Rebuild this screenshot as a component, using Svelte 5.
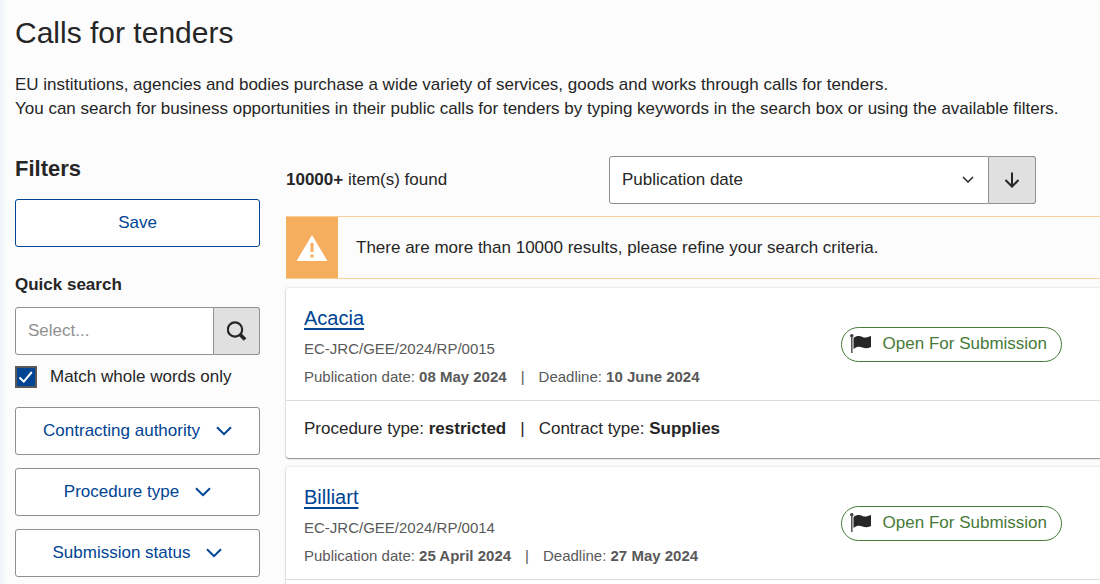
<script>
	let keyword = $state('');
	let wholeWords = $state(true);
	let sortBy = $state('publication');
	let descending = $state(true);

	const filters = ['Contracting authority', 'Procedure type', 'Submission status'];

	const tenders = [
		{
			title: 'Acacia',
			reference: 'EC-JRC/GEE/2024/RP/0015',
			published: '08 May 2024',
			deadline: '10 June 2024',
			procedure: 'restricted',
			contract: 'Supplies',
			status: 'Open For Submission'
		},
		{
			title: 'Billiart',
			reference: 'EC-JRC/GEE/2024/RP/0014',
			published: '25 April 2024',
			deadline: '27 May 2024',
			procedure: '',
			contract: '',
			status: 'Open For Submission'
		}
	];
</script>

<main>
	<h1>Calls for tenders</h1>
	<p class="intro">
		EU institutions, agencies and bodies purchase a wide variety of services, goods and works through calls for tenders.<br />
		You can search for business opportunities in their public calls for tenders by typing keywords in the search box or using the available filters.
	</p>

	<div class="columns">
		<aside>
			<h2>Filters</h2>
			<button class="save" type="button">Save</button>

			<label class="heading" for="keyword">Quick search</label>
			<div class="search">
				<input id="keyword" type="text" placeholder="Select..." bind:value={keyword} />
				<button type="button" aria-label="Search">
					<svg width="20" height="20" viewBox="0 0 20 20">
						<circle cx="8" cy="8.5" r="7.2" fill="none" stroke="#262626" stroke-width="2.2" />
						<path d="M12.5 13 L18.1 18.6" stroke="#262626" stroke-width="3.6" />
					</svg>
				</button>
			</div>

			<label class="check">
				<input type="checkbox" bind:checked={wholeWords} />
				<svg width="22" height="22" viewBox="0 0 22 22">
					<path d="M4.5 11.5 L8.8 15.6 L16.8 6" fill="none" stroke="#fff" stroke-width="2" />
				</svg>
				<span>Match whole words only</span>
			</label>

			<div class="filters">
				{#each filters as filter}
					<button type="button">
						{filter}
						<svg width="16" height="10" viewBox="0 0 16 10">
							<path d="M1 1.2 L8 8.2 L15 1.2" fill="none" stroke="#004494" stroke-width="2" />
						</svg>
					</button>
				{/each}
			</div>
		</aside>

		<section>
			<div class="toolbar">
				<p><strong>10000+</strong> item(s) found</p>
				<div class="sort">
					<select aria-label="Sort by" bind:value={sortBy}>
						<option value="publication">Publication date</option>
						<option value="deadline">Deadline</option>
					</select>
					<svg class="caret" width="12" height="8" viewBox="0 0 12 8">
						<path d="M1 1 L6 6 L11 1" fill="none" stroke="#262626" stroke-width="1.5" />
					</svg>
					<button type="button" aria-label="Sort direction" onclick={() => (descending = !descending)}>
						<svg class:up={!descending} width="16" height="16" viewBox="0 0 16 16">
							<path d="M8 0.5 V14.5 M1.5 8 L8 14.5 L14.5 8" fill="none" stroke="#262626" stroke-width="2" />
						</svg>
					</button>
				</div>
			</div>

			<div class="alert" role="alert">
				<div class="icon">
					<svg width="32" height="26" viewBox="0 0 32 26">
						<path d="M16 0 L31.5 26 H0.5 Z" fill="#fff" />
						<path d="M14.5 8 H17.5 V17 H14.5 Z M14.5 19.5 H17.5 V22.5 H14.5 Z" fill="#f5ae5d" />
					</svg>
				</div>
				<p>There are more than 10000 results, please refine your search criteria.</p>
			</div>

			{#each tenders as tender}
				<article>
					<header>
						<div class="summary">
							<h3><a href="#{tender.title}">{tender.title}</a></h3>
							<p>{tender.reference}</p>
							<p>
								Publication date: <strong>{tender.published}</strong><span class="bar">|</span>Deadline: <strong>{tender.deadline}</strong>
							</p>
						</div>
						<span class="status">
							<svg width="22" height="20" viewBox="0 0 22 20">
								<circle cx="1.8" cy="1.8" r="1.8" fill="#404040" />
								<path d="M1.8 2 V19" stroke="#505050" stroke-width="1.5" />
								<path d="M3.5 4 C7 1.2 10 1.8 12.5 3 C15 4.2 18 3.2 21 2 V13 C18 14.4 15.5 14.8 12.5 13.6 C9.5 12.4 7 12.4 3.5 15 Z" fill="#262626" />
							</svg>
							{tender.status}
						</span>
					</header>
					<footer>
						{#if tender.procedure}
							Procedure type: <strong>{tender.procedure}</strong><span class="bar">|</span>Contract type: <strong>{tender.contract}</strong>
						{/if}
					</footer>
				</article>
			{/each}
		</section>
	</div>
</main>

<style>
	:global(body) {
		margin: 0;
		background: #fcfcfc;
		overflow: hidden;
	}

	main {
		padding: 16px 0 0 15px;
		min-height: 100vh;
		box-sizing: border-box;
		font-family: "Liberation Sans", Arial, sans-serif;
		font-size: 17px;
		line-height: 24px;
		color: #262626;
		background: linear-gradient(to right, #f0f3f8, #fcfcfc 8px);
	}

	h1, h2, h3, p {
		margin: 0;
		font-weight: normal;
	}

	button, input, select {
		box-sizing: border-box;
		font: inherit;
		color: inherit;
		margin: 0;
	}

	button {
		cursor: pointer;
	}

	h1 {
		font-size: 30px;
		line-height: 34px;
	}

	.intro {
		margin-top: 23px;
		white-space: nowrap;
	}

	.columns {
		display: grid;
		grid-template-columns: 245px 1fr;
		column-gap: 26px;
		margin-top: 35px;
	}

	aside h2 {
		font-size: 22px;
		font-weight: bold;
		line-height: 26px;
	}

	.save {
		width: 100%;
		height: 48px;
		margin-top: 17px;
		background: #fff;
		border: 1px solid #004494;
		border-radius: 3px;
		color: #004494;
	}

	.heading {
		display: block;
		margin: 26px 0 10px;
		font-weight: bold;
	}

	.search {
		display: flex;
		height: 48px;
	}

	.search input {
		flex: 1;
		min-width: 0;
		padding: 0 12px;
		border: 1px solid #909090;
		border-radius: 3px 0 0 3px;
		background: #fff;
	}

	.search input::placeholder {
		color: #909090;
		opacity: 1;
	}

	.search button, .sort button {
		display: flex;
		align-items: center;
		justify-content: center;
		width: 46px;
		padding: 0;
		border: 1px solid #909090;
		border-left: 0;
		border-radius: 0 3px 3px 0;
		background: #e0e0e0;
	}

	.check {
		position: relative;
		display: flex;
		align-items: center;
		gap: 13px;
		margin-top: 10px;
	}

	.check input {
		appearance: none;
		width: 22px;
		height: 22px;
		border: 2px solid #595959;
		background: #fff;
	}

	.check input:checked {
		background: #004494;
	}

	.check svg {
		position: absolute;
		left: 0;
		pointer-events: none;
	}

	.check input:not(:checked) + svg {
		display: none;
	}

	.filters {
		display: flex;
		flex-direction: column;
		gap: 13px;
		margin-top: 18px;
	}

	.filters button {
		display: flex;
		align-items: center;
		justify-content: center;
		gap: 16px;
		height: 48px;
		border: 1px solid #909090;
		border-radius: 3px;
		background: #fff;
		color: #004494;
	}

	section {
		min-width: 0;
	}

	.toolbar {
		display: flex;
		align-items: center;
		justify-content: space-between;
		padding-right: 64px;
	}

	.sort {
		position: relative;
		display: flex;
		width: 427px;
		height: 48px;
	}

	.sort select {
		flex: 1;
		appearance: none;
		padding: 0 12px;
		border: 1px solid #909090;
		border-radius: 3px 0 0 3px;
		background: #fff;
	}

	.sort .caret {
		position: absolute;
		right: 62px;
		top: 20px;
		pointer-events: none;
	}

	.sort button {
		width: 47px;
	}

	.up {
		transform: rotate(180deg);
	}

	.alert {
		display: flex;
		align-items: stretch;
		height: 61px;
		margin-top: 12px;
		border: 1px solid #f9cf9b;
		border-width: 1px 0;
	}

	.alert .icon {
		display: flex;
		align-items: center;
		justify-content: center;
		width: 52px;
		background: #f5ae5d;
	}

	.alert p {
		align-self: center;
		padding-left: 18px;
	}

	article {
		margin-top: 9px;
		border-radius: 3px 0 0 3px;
		background: #fff;
		box-shadow: 0 1px 1px rgba(0, 0, 0, 0.4), 0 0 3px rgba(0, 0, 0, 0.18);
	}

	header {
		display: flex;
		align-items: center;
		justify-content: space-between;
		height: 113px;
		box-sizing: border-box;
		padding: 0 38px 0 18px;
		border-bottom: 1px solid #dcdcdc;
		font-size: 15px;
		line-height: 28px;
		color: #595959;
	}

	.summary {
		padding-top: 4px;
	}

	h3 {
		font-size: 20px;
		line-height: 34px;
	}

	h3 a {
		color: #004494;
		text-underline-offset: 3px;
	}

	.bar {
		margin: 0 14px;
	}

	.status {
		display: flex;
		align-items: center;
		gap: 11px;
		height: 35px;
		box-sizing: border-box;
		padding: 0 14px 0 8px;
		border: 1px solid #467a39;
		border-radius: 18px;
		font-size: 17px;
		color: #467a39;
	}

	footer {
		height: 57px;
		padding: 0 18px;
		line-height: 56px;
	}
</style>
